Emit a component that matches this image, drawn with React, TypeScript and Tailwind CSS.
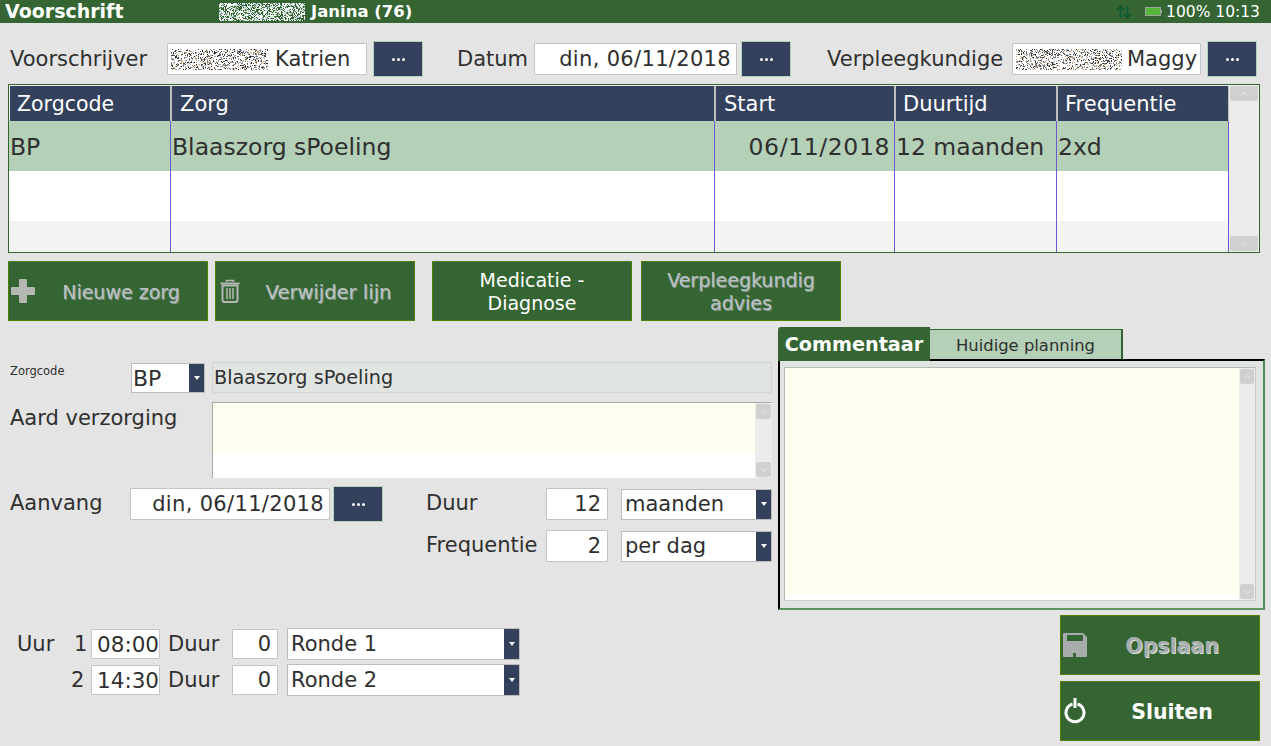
import React from 'react';

const FONT = 'font-["DejaVu_Sans",Verdana,sans-serif]';

const DARK_NOISE = ['#2b2b2b', '#555555', '#8a8a8a', '#b5a890', '#8fa8c0', '#c9a070', '#444444'];
const LIGHT_NOISE = ['#ffffff', '#ffffff', '#e8efe8', '#c8d8c8', '#a8c4d4', '#ffffff', '#dde8dd'];

// pixel noise standing in for the blurred-out names
const Noise = ({ w, h, seed, colors = DARK_NOISE, density = 36 }: { w: number; h: number; seed: number; colors?: string[]; density?: number }) => {
  const rects: React.ReactElement[] = [];
  let s = seed;
  for (let y = 0; y < h; y++) {
    for (let x = 0; x < w; x++) {
      s = (s * 1103515245 + 12345) & 0x7fffffff;
      if ((s >> 8) % 100 < density) {
        rects.push(<rect key={x + '-' + y} x={x} y={y} width="1" height="1" fill={colors[(s >> 16) % colors.length]} />);
      }
    }
  }
  return (
    <svg width={w} height={h} className="shrink-0">
      {rects}
    </svg>
  );
};

const DotsButton = () => (
  <button className="w-[50px] h-[36px] shrink-0 bg-[#33415c] border border-[#b4d0b6] flex items-center justify-center gap-[2px]">
    <span className="w-[3px] h-[3px] rounded-full bg-white" />
    <span className="w-[3px] h-[3px] rounded-full bg-white" />
    <span className="w-[3px] h-[3px] rounded-full bg-white" />
  </button>
);

const Field = ({ className, children }: { className: string; children: React.ReactNode }) => (
  <div className={`bg-white border border-[#c4c4c4] rounded-[1px] flex items-center whitespace-nowrap shrink-0 ${className}`}>{children}</div>
);

const Select = ({ className, label, pad = 'pl-[3px] pt-[2px]' }: { className: string; label: string; pad?: string }) => (
  <div className={`bg-white border border-[#bdbdbd] flex items-center justify-between shrink-0 ${className}`}>
    <span className={pad}>{label}</span>
    <span className="w-[15px] h-full bg-[#33415c] flex items-center justify-center">
      <span className="w-0 h-0 border-l-[3.5px] border-r-[3.5px] border-t-[4px] border-l-transparent border-r-transparent border-t-white" />
    </span>
  </div>
);

const Scrollbar = ({ className }: { className: string }) => (
  <div className={`bg-[#ececec] flex flex-col justify-between shrink-0 ${className}`}>
    <div className="h-[15px] mx-[1px] mt-[1px] bg-[#d0d0d0] rounded-[2px] flex items-center justify-center">
      <svg width="7" height="4" viewBox="0 0 7 4"><path d="M0.5 3.5 3.5 0.5 6.5 3.5" fill="none" stroke="#e8e8e8" /></svg>
    </div>
    <div className="h-[15px] mx-[1px] mb-[1px] bg-[#d0d0d0] rounded-[2px] flex items-center justify-center">
      <svg width="7" height="4" viewBox="0 0 7 4"><path d="M0.5 0.5 3.5 3.5 6.5 0.5" fill="none" stroke="#e8e8e8" /></svg>
    </div>
  </div>
);

const GREY = 'text-[#bcc2c4] [text-shadow:1px_1px_0_#86988c]';

const ActionButton = ({ className, textClass, icon, children }: { className?: string; textClass: string; icon?: React.ReactNode; children: React.ReactNode }) => (
  <button className={`relative w-[200px] h-[60px] shrink-0 bg-[#356532] border border-[#4f8000] flex items-center justify-center text-center leading-[23px] pt-[2px] ${textClass} ${className ?? ''}`}>
    {icon && <span className="absolute left-[2px] top-0 bottom-0 w-[26px] flex items-center justify-center">{icon}</span>}
    {children}
  </button>
);

const columns = [
  { title: 'Zorgcode', w: 'w-[162px]', value: 'BP', align: '', head: 'pl-[7px] ml-[1px] text-[20.5px]' },
  { title: 'Zorg', w: 'w-[544px]', value: 'Blaaszorg sPoeling', align: '', head: 'pl-[8px] border-l' },
  { title: 'Start', w: 'w-[180px]', value: '06/11/2018', align: 'justify-end pr-[4px] tracking-[0.6px]', head: 'pl-[8px] border-l' },
  { title: 'Duurtijd', w: 'w-[162px]', value: '12 maanden', align: '', head: 'pl-[7px] border-l' },
  { title: 'Frequentie', w: 'w-[172px]', value: '2xd', align: '', head: 'pl-[7px] border-l' },
];

const App: React.FC = () => {
  return (
    <div className={`${FONT} w-[1271px] h-[746px] overflow-hidden bg-[#e4e4e4] text-[#2f2f2f] text-[21px]`}>
      {/* title bar */}
      <div className="h-[23px] bg-[#356532] text-white flex items-center">
        <div className="w-[219px] pl-[5px] font-bold text-[19px] leading-[23px]">Voorschrift</div>
        <div className="flex items-center gap-[6px]">
          <Noise w={86} h={18} seed={11} colors={LIGHT_NOISE} density={62} />
          <span className="font-bold text-[16.5px] leading-[20px]">Janina (76)</span>
        </div>
        <div className="ml-auto pr-[11px] flex items-center text-[15.5px] leading-[20px]">
          <svg width="16" height="14" viewBox="0 0 16 14" className="mr-[13px]">
            <path d="M4.5 13V2M1 5l3.500-4L8 5M11.500 1v11M8 9l3.500 4L15 9" fill="none" stroke="#0f5a33" strokeWidth="2" />
          </svg>
          <svg width="17" height="9" viewBox="0 0 17 9" className="mr-[4px]">
            <rect x="0.500" y="0.500" width="15" height="8" fill="#55b53a" stroke="#9aa89a" />
            <rect x="16" y="3" width="1" height="3" fill="#9aa89a" />
          </svg>
          100% 10:13
        </div>
      </div>

      {/* prescriber row */}
      <div className="h-[36px] mt-[18px] flex items-center pl-[10px]">
        <span className="w-[157px] shrink-0 pt-[2px]">Voorschrijver</span>
        <Field className="w-[200px] h-[32px] pl-[3px]">
          <Noise w={97} h={21} seed={5} />
          <span className="ml-[7px] pt-[2px]">Katrien</span>
        </Field>
        <span className="w-[6px] shrink-0" />
        <DotsButton />
        <span className="ml-[34px] w-[77px] shrink-0 pt-[2px]">Datum</span>
        <Field className="w-[203px] h-[32px] justify-end pr-[5px] pt-[2px] tracking-[0.33px]">din, 06/11/2018</Field>
        <span className="w-[4px] shrink-0" />
        <DotsButton />
        <span className="ml-[36px] w-[185px] shrink-0 pt-[2px]">Verpleegkundige</span>
        <Field className="w-[189px] h-[32px] pl-[3px]">
          <Noise w={106} h={21} seed={29} />
          <span className="ml-[5px] pt-[2px]">Maggy</span>
        </Field>
        <span className="w-[6px] shrink-0" />
        <DotsButton />
      </div>

      {/* prescription table */}
      <div className="mt-[7px] ml-[8px] w-[1252px] h-[169px] border border-[#35652f] bg-white flex">
        <div className="flex w-[1220px]">
          {columns.map((col) => (
            <div key={col.title} className={`${col.w} flex flex-col shrink-0`}>
              <div className="h-[36px] pt-[1px] bg-[#ececec]">
                <div className={`h-[35px] bg-[#33415c] text-white flex items-center pt-[2px] border-r border-[#c0c0c0] ${col.head}`}>{col.title}</div>
              </div>
              <div className="flex-1 flex flex-col border-r border-[#6a5acd]">
                <div className={`h-[50px] bg-[#b4d0b6] flex items-center pl-[1px] pt-[3px] text-[23.5px] ${col.align}`}>{col.value}</div>
                <div className="h-[50px] bg-white" />
                <div className="flex-1 bg-[#f3f3f3]" />
              </div>
            </div>
          ))}
        </div>
        <Scrollbar className="w-[30px]" />
      </div>

      {/* action buttons */}
      <div className="mt-[8px] ml-[8px] flex">
        <ActionButton
          textClass={`${GREY} text-[19px]`}
          icon={
            <svg width="24" height="24" viewBox="0 0 24 24" className="-ml-[2px]"><path d="M9 0h6a1 1 0 0 1 1 1v7h7a1 1 0 0 1 1 1v6a1 1 0 0 1-1 1h-7v7a1 1 0 0 1-1 1H9a1 1 0 0 1-1-1v-7H1a1 1 0 0 1-1-1V9a1 1 0 0 1 1-1h7V1a1 1 0 0 1 1-1z" fill="#b4b8b4" /></svg>
          }
        >
          <span className="pl-[26px]">Nieuwe zorg</span>
        </ActionButton>
        <ActionButton
          className="ml-[7px]"
          textClass={`${GREY} text-[19.5px]`}
          icon={
            <svg width="20" height="24" viewBox="0 0 20 24" fill="none" stroke="#b4b8b4" className="-ml-[2px]">
              <path d="M0.500 4.500h19" strokeWidth="2" />
              <path d="M6.500 3V1.500h7V3" strokeWidth="1.500" />
              <path d="M2.500 6.500h15V21a2 2 0 0 1-2 2h-11a2 2 0 0 1-2-2z" strokeWidth="2" />
              <path d="M7 9v11M10 9v11M13 9v11" strokeWidth="1.500" />
            </svg>
          }
        >
          <span className="pl-[27px]">Verwijder lijn</span>
        </ActionButton>
        <ActionButton className="ml-[17px]" textClass="text-white text-[19px]">Medicatie -<br />Diagnose</ActionButton>
        <ActionButton className="ml-[9px]" textClass={`${GREY} text-[19px]`}>Verpleegkundig<br />advies</ActionButton>
      </div>

      {/* detail area */}
      <div className="flex">
        {/* left form */}
        <div className="w-[778px] shrink-0 pl-[10px] pt-[41px]">
          <div className="flex h-[32px] items-start">
            <span className="w-[121px] shrink-0 text-[11.5px] leading-[16px] mt-[1px]">Zorgcode</span>
            <Select className="w-[74px] h-[30px] mt-[1px] text-[22px]" label="BP" pad="pl-[1px]" />
            <div className="ml-[7px] w-[560px] h-[31px] bg-[#e1e5e2] border border-[#d2d4d2] rounded-[2px] flex items-center pl-[1px] pt-[2px] text-[19.2px]">Blaaszorg sPoeling</div>
          </div>
          <div className="mt-[8px] flex h-[76px]">
            <span className="w-[202px] shrink-0 pt-[1px]">Aard verzorging</span>
            <div className="w-[560px] border-t border-l border-[#a8a8a8] bg-white flex">
              <div className="flex-1 h-[50px] bg-[#fffff0]" />
              <Scrollbar className="w-[17px]" />
            </div>
          </div>
          <div className="mt-[8px] flex h-[36px] items-center">
            <span className="w-[120px] shrink-0">Aanvang</span>
            <Field className="w-[200px] h-[32px] justify-end pr-[5px] pt-[2px] tracking-[0.33px]">din, 06/11/2018</Field>
            <span className="w-[3px] shrink-0" />
            <DotsButton />
            <span className="ml-[43px] w-[120px] shrink-0">Duur</span>
            <Field className="w-[62px] h-[32px] justify-end pr-[6px] pt-[2px]">12</Field>
            <Select className="ml-[13px] w-[151px] h-[31px]" label="maanden" />
          </div>
          <div className="mt-[8px] flex h-[32px] items-center pl-[416px]">
            <span className="w-[120px] shrink-0">Frequentie</span>
            <Field className="w-[62px] h-[32px] justify-end pr-[6px] pt-[2px]">2</Field>
            <Select className="ml-[13px] w-[151px] h-[31px]" label="per dag" />
          </div>
          <div className="mt-[66px] pl-[7px] flex h-[32px] items-center">
            <span className="w-[57px] shrink-0 pt-[2px]">Uur</span>
            <span className="w-[17px] shrink-0 pt-[2px]">1</span>
            <Field className="w-[69px] h-[30px] justify-end pt-[2px] text-[21.5px]">08:00</Field>
            <span className="ml-[8px] w-[64px] shrink-0 pt-[2px]">Duur</span>
            <Field className="w-[46px] h-[30px] justify-end pr-[6px] pt-[2px]">0</Field>
            <Select className="ml-[9px] w-[233px] h-[32px]" label="Ronde 1" />
          </div>
          <div className="mt-[4px] pl-[7px] flex h-[32px] items-center">
            <span className="w-[54px] shrink-0" />
            <span className="w-[20px] shrink-0 pt-[2px]">2</span>
            <Field className="w-[69px] h-[30px] justify-end pt-[2px] text-[21.5px]">14:30</Field>
            <span className="ml-[8px] w-[64px] shrink-0 pt-[2px]">Duur</span>
            <Field className="w-[46px] h-[30px] justify-end pr-[6px] pt-[2px]">0</Field>
            <Select className="ml-[9px] w-[233px] h-[32px]" label="Ronde 2" />
          </div>
        </div>

        {/* right tabs and bottom buttons */}
        <div className="pt-[6px] w-[487px] shrink-0 flex flex-col">
          <div className="relative z-10 flex items-start h-[34px] -mb-[2px]">
            <div className="w-[152px] h-[34px] bg-[#356532] text-white font-bold text-[19.2px] rounded-tl-[3px] flex items-center justify-center pt-[3px]">Commentaar</div>
            <div className="w-[193px] h-[31px] mt-[2px] bg-[#b4d0b6] border-t border-r-2 border-b border-t-[#35652f] border-r-[#35652f] border-b-black flex items-center justify-center pt-[4px] text-[16.4px]">Huidige planning</div>
          </div>
          <div className="w-[487px] h-[251px] border-2 border-t-black border-l-black border-r-[#4f8a54] border-b-[#5d9560] bg-[#e1e5e2] pt-[6px] pl-[4px] pr-[7px] pb-[7px]">
            <div className="h-full border border-[#b8b8b8] border-r-[#c8c8c8] border-b-[#d0d0d0] bg-white flex">
              <div className="flex-1 h-[226px] bg-[#fffff0]" />
              <Scrollbar className="w-[16px]" />
            </div>
          </div>
          <div className="mt-[5px] ml-[282px] flex flex-col gap-[6px]">
            <ActionButton
              textClass="font-bold text-[#a8aeae] [text-shadow:1px_1px_0_#e0e4e0] text-[20.5px]"
              icon={
                <svg width="24" height="24" viewBox="0 0 24 24" className="-ml-[2px]">
                  <path fillRule="evenodd" d="M1 0h19l4 4v19a1 1 0 0 1-1 1H1a1 1 0 0 1-1-1V1a1 1 0 0 1 1-1zM4 2v6h16V2zM10 20v4h3v-4z" fill="#a8acac" />
                </svg>
              }
            >
              <span className="pl-[24px]">Opslaan</span>
            </ActionButton>
            <ActionButton
              textClass="font-bold text-white text-[20.5px]"
              icon={
                <svg width="24" height="26" viewBox="0 0 24 26" fill="none" stroke="#fff" strokeWidth="3" className="-ml-[2px]">
                  <path d="M9.500 6a9 9 0 1 0 5 0" />
                  <path d="M12 0v10" />
                </svg>
              }
            >
              <span className="pl-[24px]">Sluiten</span>
            </ActionButton>
          </div>
        </div>
      </div>
    </div>
  );
};

export default App;
